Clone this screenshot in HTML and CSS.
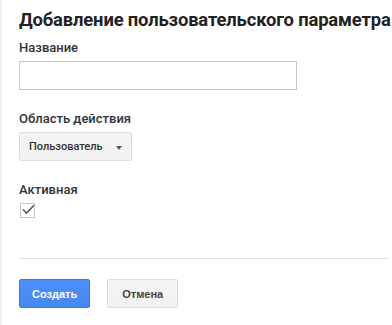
FILE: index.html
```html
<!DOCTYPE html>
<html lang="ru">
<head>
    <meta charset="UTF-8">
    <title>Добавление пользовательского параметра</title>
    <link rel="stylesheet" href="styles.css">
</head>
<body>
    <div class="panel">
        <h1>Добавление пользовательского параметра</h1>

        <div class="field">
            <label class="field-label" for="name">Название</label>
            <input type="text" id="name" class="text-input">
        </div>

        <div class="field">
            <div class="field-label">Область действия</div>
            <div class="select-button">
                <span>Пользователь</span>
                <span class="arrow"></span>
            </div>
        </div>

        <div class="field">
            <div class="field-label">Активная</div>
            <div class="checkbox">
                <svg width="13" height="11" viewBox="0 0 13 11">
                    <path d="M1 5.5 L4.5 9 L12 1.2" fill="none" stroke="#555" stroke-width="1.6"/>
                </svg>
            </div>
        </div>

        <div class="divider"></div>

        <div class="actions">
            <button class="btn btn-primary">Создать</button>
            <button class="btn">Отмена</button>
        </div>
    </div>
</body>
</html>
```

FILE: styles.css
```css
body {
    margin: 0;
    background-color: #fff;
    font-family: Roboto, "Liberation Sans", Arial, sans-serif;
    color: #333;
}

.panel {
    border-left: 2px solid #f1f1f1;
    padding: 8px 0 0 17px;
    height: 317px;
    overflow: hidden;
}

h1 {
    margin: 0;
    font-size: 18.4px;
    letter-spacing: -0.15px;
    font-weight: bold;
    color: #222;
    white-space: nowrap;
    line-height: 24px;
}

.field {
    margin-top: 8px;
}

.field + .field {
    margin-top: 21px;
}

.field-label {
    display: block;
    font-size: 13px;
    font-weight: 500;
    color: #333;
    line-height: 16px;
    margin-bottom: 5px;
}

.text-input {
    display: block;
    box-sizing: border-box;
    width: 278px;
    height: 29px;
    border: 1px solid #c6c6c6;
    margin: 0;
    padding: 0 8px;
    font-size: 13px;
}

.select-button {
    box-sizing: border-box;
    display: inline-flex;
    align-items: center;
    justify-content: space-between;
    height: 29px;
    width: 113px;
    padding: 0 9px 0 9px;
    background: linear-gradient(#f5f5f5, #f1f1f1);
    border: 1px solid #dcdcdc;
    border-radius: 2px;
    font-size: 11px;
    font-weight: 500;
    color: #333;
}

.arrow {
    width: 0;
    height: 0;
    border-left: 3.5px solid transparent;
    border-right: 3.5px solid transparent;
    border-top: 4px solid #555;
    margin-top: 2px;
}

.checkbox {
    box-sizing: border-box;
    width: 15px;
    height: 15px;
    margin-left: 1px;
    border: 1px solid #c6c6c6;
    display: flex;
    align-items: flex-end;
    justify-content: center;
    padding-bottom: 1px;
    position: relative;
}

.checkbox svg {
    position: relative;
    left: 1px;
    top: -1px;
}

.divider {
    margin-top: 40px;
    border-top: 1px solid #e0e0e0;
    margin-right: 3px;
}

.actions {
    display: flex;
    gap: 17px;
    margin-top: 20px;
}

.btn {
    box-sizing: border-box;
    height: 29px;
    min-width: 71px;
    padding: 0 12px;
    border: 1px solid #dcdcdc;
    border-radius: 2px;
    background: linear-gradient(#f5f5f5, #f1f1f1);
    font-family: "Liberation Sans", Arial, sans-serif;
    font-size: 11px;
    font-weight: bold;
    color: #444;
}

.btn-primary {
    background: linear-gradient(#4d90fe, #4787ed);
    border-color: #3079ed;
    color: #fff;
}
```
